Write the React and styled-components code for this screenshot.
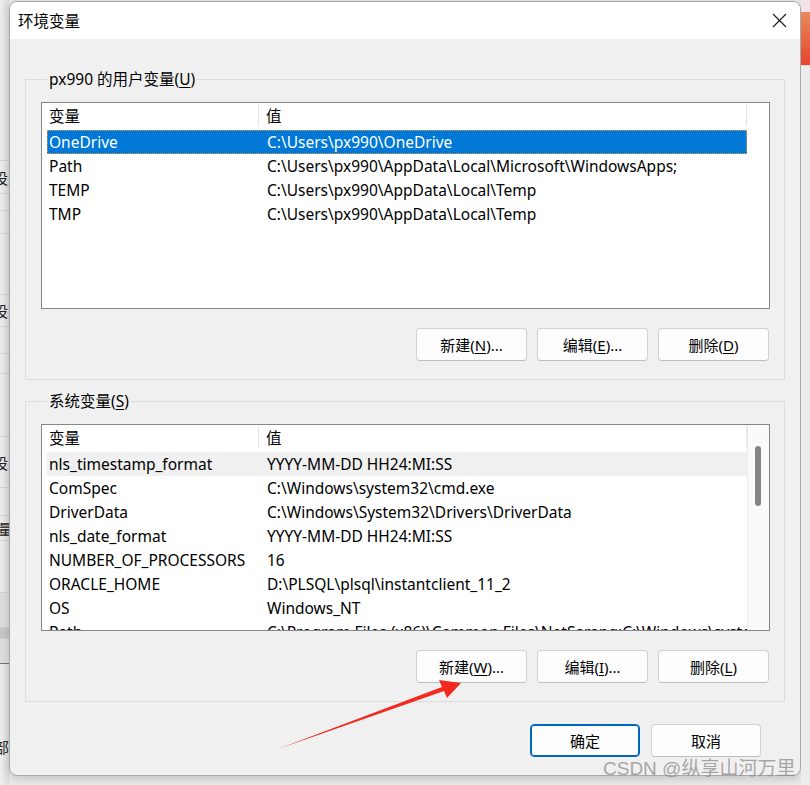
import React from 'react'
import styled, { createGlobalStyle } from 'styled-components'

const Global = createGlobalStyle`
  body { margin: 0; background: #e9e9e9; }
  * { box-sizing: border-box; }
`

const FONT = `"Noto Sans", "Noto Sans CJK SC", sans-serif`

const userVars = [
  ['OneDrive', String.raw`C:\Users\px990\OneDrive`],
  ['Path', String.raw`C:\Users\px990\AppData\Local\Microsoft\WindowsApps;`],
  ['TEMP', String.raw`C:\Users\px990\AppData\Local\Temp`],
  ['TMP', String.raw`C:\Users\px990\AppData\Local\Temp`],
]

const sysVars = [
  ['nls_timestamp_format', 'YYYY-MM-DD HH24:MI:SS'],
  ['ComSpec', String.raw`C:\Windows\system32\cmd.exe`],
  ['DriverData', String.raw`C:\Windows\System32\Drivers\DriverData`],
  ['nls_date_format', 'YYYY-MM-DD HH24:MI:SS'],
  ['NUMBER_OF_PROCESSORS', '16'],
  ['ORACLE_HOME', String.raw`D:\PLSQL\plsql\instantclient_11_2`],
  ['OS', 'Windows_NT'],
  ['Path', String.raw`C:\Program Files (x86)\Common Files\NetSarang;C:\Windows\system32;`],
]

// settings page peeking out at the left of the dialog
const leftRows = [
  { h: 161 }, { h: 33, t: '设置' }, { h: 17 }, { h: 23 }, { h: 61 },
  { h: 32, t: '设置' }, { h: 27 }, { h: 20 }, { h: 63 },
  { h: 51, t: '设置' }, { h: 28 }, { h: 25, t: '变量', shift: -17 }, { h: 52 },
  { h: 35, tone: 'mid' }, { h: 11, tone: 'dark' }, { h: 25, tone: 'mid', line: '#6b7075' },
  { h: 122, t: '部', end: true, shift: -6 },
]

function VarList({ rows, selected, hover, scroll }) {
  return (
    <$list>
      <$listMain>
        <$header>
          <$headCell $w={212}>变量</$headCell>
          <$headCell $w={488} $pad={7}>值</$headCell>
        </$header>
        {rows.map(([k, v], i) => (
          <$row key={k + i} $sel={i === selected} $hover={i === hover}>
            <$cell $w={212}>{k}</$cell>
            <$cell $w={488} $pad={7}>{v}</$cell>
          </$row>
        ))}
      </$listMain>
      <$scrollArea $on={scroll}>{scroll && <$thumb />}</$scrollArea>
    </$list>
  )
}

function Buttons({ labels }) {
  return (
    <$btnRow>
      {labels.map(([a, m, b]) => (
        <$btn key={a}>{a}<u>{m}</u>{b}</$btn>
      ))}
    </$btnRow>
  )
}

export default function App() {
  return (
    <$page>
      <Global />
      <$leftStrip>
        {leftRows.map((r, i) => (
          <$leftRow key={i} $h={r.h} $tone={r.tone} $line={r.line} $end={r.end} $shift={r.shift}>
            {r.t && <span>{r.t}</span>}
          </$leftRow>
        ))}
      </$leftStrip>

      <$window>
        <$titleBar>
          <$title>环境变量</$title>
          <svg width="15" height="15" viewBox="0 0 15 15">
            <path d="M1 1 L14 14 M14 1 L1 14" stroke="#1a1a1a" strokeWidth="1.1" fill="none" />
          </svg>
        </$titleBar>

        <$body>
          <$group>
            <$legend>px990 的用户变量(<u>U</u>)</$legend>
            <VarList rows={userVars} selected={0} />
            <Buttons labels={[['新建(', 'N', ')...'], ['编辑(', 'E', ')...'], ['删除(', 'D', ')']]} />
          </$group>

          <$group $top={10}>
            <$legend>系统变量(<u>S</u>)</$legend>
            <VarList rows={sysVars} hover={0} scroll />
            <Buttons labels={[['新建(', 'W', ')...'], ['编辑(', 'I', ')...'], ['删除(', 'L', ')']]} />
          </$group>

          <$footer>
            <$btn $primary $w={110}>确定</$btn>
            <$btn $w={110}>取消</$btn>
          </$footer>
        </$body>
      </$window>

      <$rightStrip>
        <$pink />
        <$orange />
        <$grey />
      </$rightStrip>

      <$arrow width="810" height="785" viewBox="0 0 810 785">
        <polygon points="278,749 442,687 439,680 461,683 447,698 444,691" fill="#f2291e" />
      </$arrow>
      <$watermark>CSDN @纵享山河万里</$watermark>
    </$page>
  )
}

const $page = styled.div`
  position: relative;
  width: 810px;
  height: 785px;
  display: flex;
  overflow: hidden;
  background: #e9e9e9;
  font-family: ${FONT};
`

const $leftStrip = styled.div`
  width: 9px;
  flex: none;
  background: linear-gradient(90deg, #eeeeee, #dcdcdc);
  display: flex;
  flex-direction: column;
  overflow: hidden;
`

const tones = { mid: '#dedede', dark: '#c9c6c6' }

const $leftRow = styled.div`
  height: ${p => p.$h}px;
  flex: none;
  border-bottom: 1px solid ${p => p.$line || '#d2d2d2'};
  background: ${p => tones[p.$tone] || 'transparent'};
  display: flex;
  align-items: ${p => (p.$end ? 'flex-end' : 'center')};
  padding-bottom: ${p => (p.$end ? 28 : 0)}px;
  font-size: 15px;
  color: #222;
  white-space: nowrap;
  span { margin-left: ${p => p.$shift ?? -7}px; }
`

const $window = styled.div`
  width: 792px;
  height: 775px;
  margin-top: 1px;
  flex: none;
  display: flex;
  flex-direction: column;
  border: 1px solid #a9a9a9;
  border-radius: 8px;
  overflow: hidden;
  background: #f0f0f0;
  box-shadow: 0 2px 10px rgba(0, 0, 0, 0.18);
`

const $titleBar = styled.div`
  height: 37px;
  flex: none;
  background: #fff;
  display: flex;
  align-items: center;
  justify-content: space-between;
  padding: 0 13px 0 8px;
`

const $title = styled.div`
  font-size: 15.5px;
  color: #000;
`

const $body = styled.div`
  flex: 1;
  display: flex;
  flex-direction: column;
  padding: 29px 15px 0 15px;
`

const $group = styled.fieldset`
  margin: ${p => p.$top || 0}px 0 0 0;
  padding: 12px 14px 18px 15px;
  border: 1px solid #dcdcdc;
  min-width: 0;
`

const $legend = styled.legend`
  margin-left: 6px;
  padding: 0 2px;
  height: 22px;
  font-size: 15.5px;
  line-height: 22px;
  color: #000;
  u { text-underline-offset: 2px; }
`

const $list = styled.div`
  width: 729px;
  height: 207px;
  border: 1px solid #828790;
  background: #fff;
  display: flex;
  overflow: hidden;
`

const $listMain = styled.div`
  width: 705px;
  padding-left: 5px;
  flex: none;
`

const $header = styled.div`
  height: 27px;
  display: flex;
  align-items: flex-start;
`

const $headCell = styled.div`
  width: ${p => p.$w}px;
  height: 22px;
  margin-top: 1px;
  padding-left: ${p => p.$pad || 2}px;
  border-right: 1px solid #e5e5e5;
  font-size: 15.5px;
  line-height: 25px;
  color: #000;
  white-space: nowrap;
  overflow: visible;
`

const $row = styled.div`
  width: 700px;
  height: 24px;
  display: flex;
  align-items: center;
  background: ${p => (p.$sel ? '#0078d7' : p.$hover ? '#f0f0f0' : 'transparent')};
  color: ${p => (p.$sel ? '#fff' : '#000')};
  outline: ${p => (p.$sel ? '1px dotted #e59a3c' : 'none')};
  outline-offset: -1px;
`

const $cell = styled.div`
  width: ${p => p.$w}px;
  padding-left: ${p => (p.$pad || 1) + 1}px;
  font-size: 15.5px;
  line-height: 23px;
  white-space: nowrap;
  overflow: hidden;
`

const $scrollArea = styled.div`
  flex: 1;
  border-left: 1px solid ${p => (p.$on ? '#ececec' : 'transparent')};
  background: ${p => (p.$on ? '#fafafa' : '#fff')};
  padding: 21px 0 0 7px;
`

const $thumb = styled.div`
  width: 6px;
  height: 60px;
  border-radius: 3px;
  background: #858585;
`

const $btnRow = styled.div`
  width: 729px;
  margin-top: 19px;
  display: flex;
  justify-content: flex-end;
  gap: 10px;
  padding-right: 1px;
`

const $btn = styled.button`
  width: ${p => p.$w || 111}px;
  height: 33px;
  border: 1px solid ${p => (p.$primary ? '#0067c0' : '#d1d1d1')};
  border-bottom-color: ${p => (p.$primary ? '#0067c0' : '#bdbdbd')};
  box-shadow: ${p => (p.$primary ? 'inset 0 0 0 1px #0067c0' : 'none')};
  border-radius: 4px;
  background: #fdfdfd;
  font-family: ${FONT};
  font-size: 15px;
  color: #000;
  padding: 0;
  u { text-underline-offset: 2px; }
`

const $footer = styled.div`
  margin-top: 22px;
  display: flex;
  justify-content: flex-end;
  gap: 11px;
  padding-right: 24px;
`

const $rightStrip = styled.div`
  width: 9px;
  flex: none;
  display: flex;
  flex-direction: column;
`

const $pink = styled.div`
  height: 12px;
  background: #f1e3e8;
`

const $orange = styled.div`
  height: 53px;
  background: linear-gradient(#ea8a5f, #e4452f);
`

const $grey = styled.div`
  flex: 1;
  background: #ececec;
  border-top: 1px solid #dadada;
`

const $arrow = styled.svg`
  position: absolute;
  left: 0;
  top: 0;
  pointer-events: none;
`

const $watermark = styled.div`
  position: absolute;
  left: 603px;
  top: 753px;
  font-size: 19px;
  color: rgba(140, 140, 140, 0.75);
  white-space: nowrap;
  font-family: "Liberation Sans", "Noto Sans CJK SC", sans-serif;
`
